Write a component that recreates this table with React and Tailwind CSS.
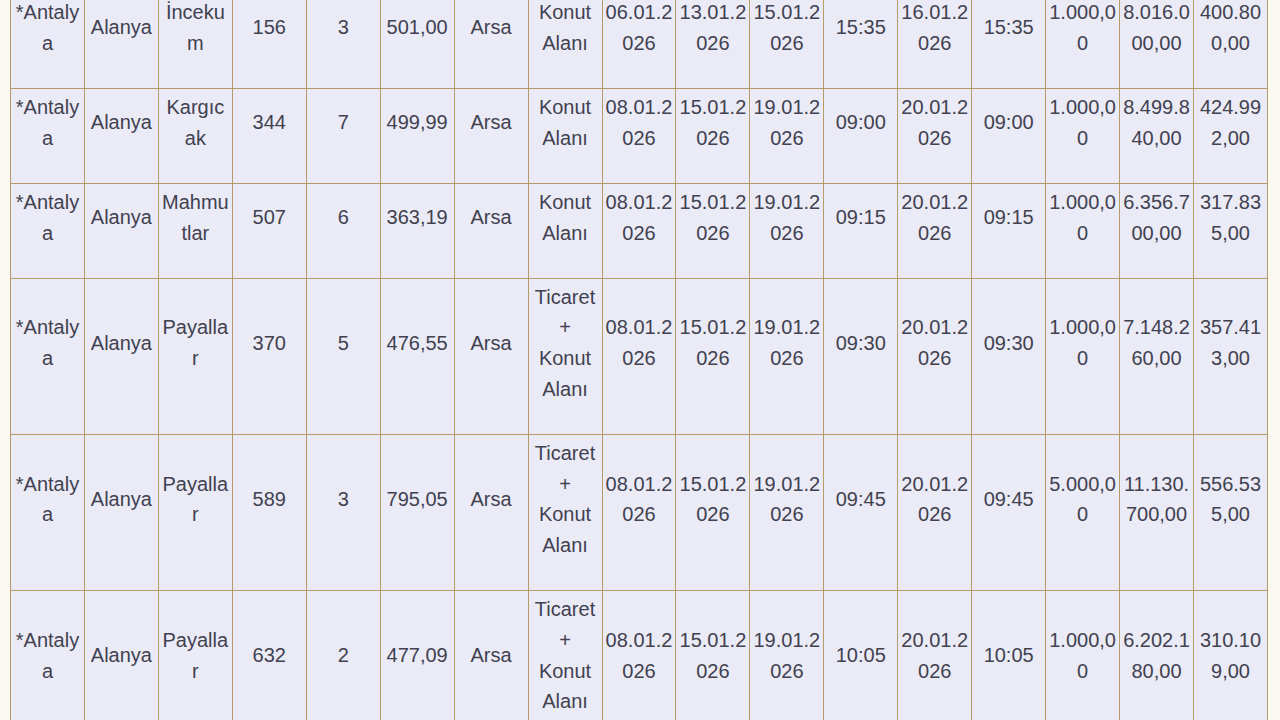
import React from 'react';

const rows = [
  ['*Antalya', 'Alanya', 'İncekum', '156', '3', '501,00', 'Arsa', 'Konut Alanı', '06.01.2026', '13.01.2026', '15.01.2026', '15:35', '16.01.2026', '15:35', '1.000,00', '8.016.000,00', '400.800,00'],
  ['*Antalya', 'Alanya', 'Kargıcak', '344', '7', '499,99', 'Arsa', 'Konut Alanı', '08.01.2026', '15.01.2026', '19.01.2026', '09:00', '20.01.2026', '09:00', '1.000,00', '8.499.840,00', '424.992,00'],
  ['*Antalya', 'Alanya', 'Mahmutlar', '507', '6', '363,19', 'Arsa', 'Konut Alanı', '08.01.2026', '15.01.2026', '19.01.2026', '09:15', '20.01.2026', '09:15', '1.000,00', '6.356.700,00', '317.835,00'],
  ['*Antalya', 'Alanya', 'Payallar', '370', '5', '476,55', 'Arsa', 'Ticaret + Konut Alanı', '08.01.2026', '15.01.2026', '19.01.2026', '09:30', '20.01.2026', '09:30', '1.000,00', '7.148.260,00', '357.413,00'],
  ['*Antalya', 'Alanya', 'Payallar', '589', '3', '795,05', 'Arsa', 'Ticaret + Konut Alanı', '08.01.2026', '15.01.2026', '19.01.2026', '09:45', '20.01.2026', '09:45', '5.000,00', '11.130.700,00', '556.535,00'],
  ['*Antalya', 'Alanya', 'Payallar', '632', '2', '477,09', 'Arsa', 'Ticaret + Konut Alanı', '08.01.2026', '15.01.2026', '19.01.2026', '10:05', '20.01.2026', '10:05', '1.000,00', '6.202.180,00', '310.109,00'],
];

export default function App() {
  return (
    <div className="h-[720px] overflow-hidden bg-[#fbfaf2] pl-[10px]" style={{ fontFamily: '"Liberation Sans", Arial, sans-serif' }}>
      <table className="mt-[-7px] w-[1258px] table-fixed border-collapse text-[20px] leading-[30.7px] text-[#414150]">
        <tbody>
          {rows.map((row, i) => (
            <tr key={i}>
              {row.map((cell, j) => (
                <td
                  key={j}
                  className="border border-[#b59c66] bg-[#ebebf8] px-[3px] pt-[3px] pb-[29.5px] text-center align-middle [overflow-wrap:anywhere]"
                >
                  {cell}
                </td>
              ))}
            </tr>
          ))}
        </tbody>
      </table>
    </div>
  );
}
